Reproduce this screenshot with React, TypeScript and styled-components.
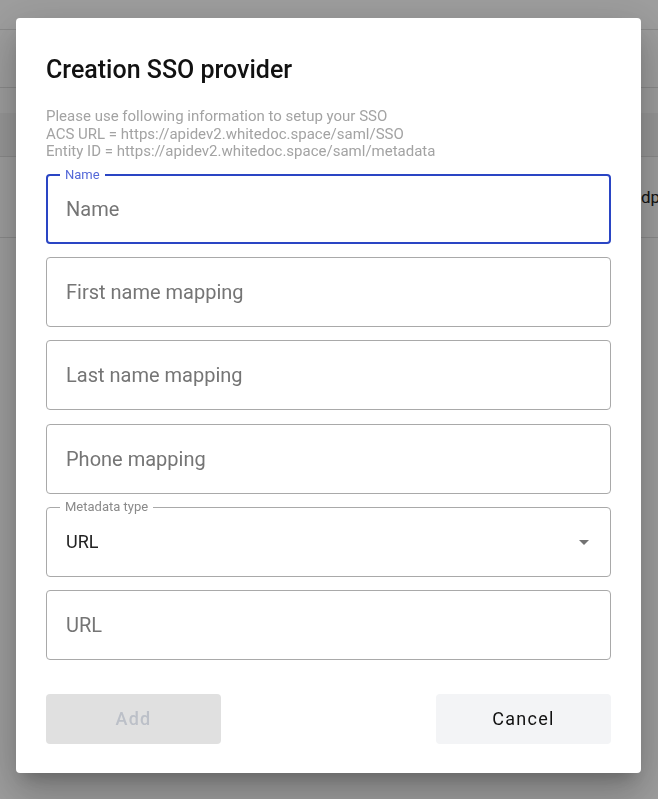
import React from 'react';
import styled, { createGlobalStyle } from 'styled-components';

const GlobalStyle = createGlobalStyle`
  html, body {
    margin: 0;
    padding: 0;
    background: #ffffff;
    font-family: Roboto, "Liberation Sans", Arial, sans-serif;
  }
  * {
    box-sizing: border-box;
  }
`;

const FIELDS = [
  { placeholder: 'Name', label: 'Name', focused: true },
  { placeholder: 'First name mapping' },
  { placeholder: 'Last name mapping' },
  { placeholder: 'Phone mapping' },
];

const App = () => {
  return (
    <>
      <GlobalStyle />
      <StyledPage>
        <StyledTopBar />
        <StyledToolbar />
        <StyledTable>
          <StyledTableHead />
          <StyledTableRow>
            <StyledCell>dpo@whitedoc.space</StyledCell>
          </StyledTableRow>
        </StyledTable>
      </StyledPage>

      <StyledBackdrop>
        <StyledDialog>
          <StyledTitle>Creation SSO provider</StyledTitle>
          <StyledDescription>
            Please use following information to setup your SSO
            <br />
            ACS URL = https://apidev2.whitedoc.space/saml/SSO
            <br />
            Entity ID = https://apidev2.whitedoc.space/saml/metadata
          </StyledDescription>

          <StyledForm>
            {FIELDS.map((field) => (
              <StyledField key={field.placeholder} focused={field.focused}>
                {field.label && <StyledLabel focused={field.focused}>{field.label}</StyledLabel>}
                <StyledInput placeholder={field.placeholder} />
              </StyledField>
            ))}
            <StyledField>
              <StyledLabel>Metadata type</StyledLabel>
              <StyledSelectValue>URL</StyledSelectValue>
              <StyledArrow viewBox="0 0 24 24">
                <path d="M7 10l5 5 5-5z" />
              </StyledArrow>
            </StyledField>
            <StyledField>
              <StyledInput placeholder="URL" />
            </StyledField>
          </StyledForm>

          <StyledActions>
            <StyledButton variant="disabled" disabled>
              Add
            </StyledButton>
            <StyledButton variant="secondary">Cancel</StyledButton>
          </StyledActions>
        </StyledDialog>
      </StyledBackdrop>
    </>
  );
};

const StyledPage = styled.div`
  width: 658px;
  height: 799px;
  overflow: hidden;
  background: #ffffff;
`;
const StyledTopBar = styled.div`
  height: 30px;
  border-bottom: 1px solid #e0e0e0;
`;
const StyledToolbar = styled.div`
  height: 58px;
  border-bottom: 1px solid #e0e0e0;
`;
const StyledTable = styled.div`
  margin-top: 25px;
`;
const StyledTableHead = styled.div`
  height: 44px;
  background: #f5f5f5;
  border-bottom: 1px solid #e0e0e0;
`;
const StyledTableRow = styled.div`
  height: 81px;
  display: flex;
  align-items: center;
  padding-left: 641px;
  overflow: hidden;
  border-bottom: 1px solid #e0e0e0;
`;
const StyledCell = styled.span`
  font-size: 17px;
  color: #222;
  white-space: nowrap;
`;

const StyledBackdrop = styled.div`
  position: fixed;
  inset: 0;
  background: rgba(0, 0, 0, 0.38);
  display: flex;
  justify-content: flex-start;
  align-items: flex-start;
  padding: 18px 0 0 16px;
`;
const StyledDialog = styled.div`
  width: 625px;
  background: #ffffff;
  border-radius: 4px;
  padding: 31px 30px 29px;
  box-shadow: 0 11px 15px -7px rgba(0, 0, 0, 0.2), 0 24px 38px 3px rgba(0, 0, 0, 0.14),
    0 9px 46px 8px rgba(0, 0, 0, 0.12);
`;
const StyledTitle = styled.h2`
  margin: 0;
  font-size: 25px;
  font-weight: 500;
  line-height: 42px;
  color: #111;
`;
const StyledDescription = styled.p`
  margin: 17px 0 0;
  font-size: 15px;
  line-height: 17.5px;
  color: #a3a3a3;
`;
const StyledForm = styled.div`
  margin-top: 13px;
  display: flex;
  flex-direction: column;
  gap: 13px;
  & > :nth-child(4) {
    margin-top: 1px;
  }
`;
const StyledField = styled.div<{ focused?: boolean }>`
  position: relative;
  height: 70px;
  display: flex;
  align-items: center;
  padding: 0 20px 0 19px;
  border-radius: 4px;
  border: ${({ focused }) => (focused ? '2px solid #2a45c4' : '1px solid #a9a9a9')};
  padding-left: ${({ focused }) => (focused ? '18px' : '19px')};
`;
const StyledLabel = styled.span<{ focused?: boolean }>`
  position: absolute;
  top: -8px;
  left: ${({ focused }) => (focused ? '12px' : '13px')};
  padding: 0 5px;
  background: #ffffff;
  font-size: 13px;
  line-height: 14px;
  color: ${({ focused }) => (focused ? '#5468d8' : '#8a8a8a')};
`;
const StyledInput = styled.input`
  width: 100%;
  border: none;
  outline: none;
  padding: 0;
  background: transparent;
  font-family: inherit;
  font-size: 20px;
  color: #333;
  &::placeholder {
    color: #757575;
  }
`;
const StyledSelectValue = styled.span`
  flex: 1;
  font-size: 18px;
  color: #222;
`;
const StyledArrow = styled.svg`
  width: 24px;
  height: 24px;
  margin-right: -6px;
  fill: #737373;
`;
const StyledActions = styled.div`
  margin-top: 34px;
  display: flex;
  justify-content: space-between;
`;
const StyledButton = styled.button<{ variant: 'disabled' | 'secondary' }>`
  width: 175px;
  height: 50px;
  border: none;
  border-radius: 4px;
  font-family: inherit;
  font-size: 18px;
  font-weight: ${({ variant }) => (variant === 'disabled' ? 500 : 400)};
  letter-spacing: 1.3px;
  background: ${({ variant }) => (variant === 'disabled' ? '#e0e0e0' : '#f3f4f6')};
  color: ${({ variant }) => (variant === 'disabled' ? '#bcc0c8' : '#111')};
`;

export default App;
